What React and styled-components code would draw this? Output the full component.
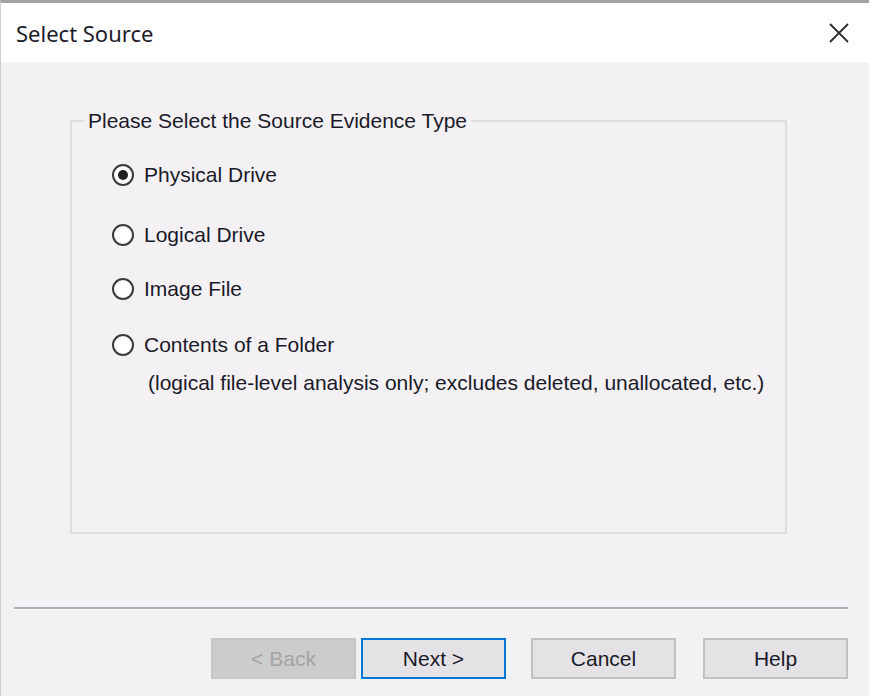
import React, { useState } from 'react';
import styled, { createGlobalStyle } from 'styled-components';

const GlobalStyle = createGlobalStyle`
  html, body {
    margin: 0;
    padding: 0;
    background: #f4f1f5;
  }
  body {
    font-family: "Liberation Sans", Arial, sans-serif;
    color: #1a1a28;
  }
`;

const StyledWindow = styled.div`
  width: 869px;
  height: 696px;
  box-sizing: border-box;
  border-top: 3px solid #a3a3a3;
  border-left: 1px solid #cfcfcf;
  background: #f4f1f5;
  display: flex;
  flex-direction: column;
  overflow: hidden;
`;

const StyledTitleBar = styled.div`
  height: 59px;
  flex-shrink: 0;
  background: #fff;
  display: flex;
  align-items: center;
  justify-content: space-between;
  padding: 0 17px 0 15px;
`;

const StyledTitle = styled.span`
  font-family: "Noto Sans", "Open Sans", sans-serif;
  font-size: 22px;
  color: #1c1c2a;
`;

const StyledClose = styled.button`
  width: 26px;
  height: 26px;
  padding: 0;
  border: none;
  background: transparent;
  display: flex;
  align-items: center;
  justify-content: center;
`;

const StyledBody = styled.div`
  flex: 1;
  display: flex;
  flex-direction: column;
  padding: 0 21px 0 13px;
`;

const StyledGroup = styled.fieldset`
  margin: 47px 61px 0 56px;
  height: 425px;
  box-sizing: border-box;
  border: 2px solid #e0dde1;
  padding: 0;
`;

const StyledLegend = styled.legend`
  font-size: 21px;
  line-height: 24px;
  color: #1a1a28;
  padding: 0 4px;
  margin-left: 12px;
`;

const StyledOptionList = styled.div`
  display: flex;
  flex-direction: column;
  padding-left: 40px;
`;

const StyledOption = styled.label`
  display: flex;
  flex-direction: column;
  margin-top: ${({ $top }) => $top}px;
  cursor: default;
`;

const StyledOptionRow = styled.span`
  display: flex;
  align-items: center;
  height: 24px;
`;

const StyledRadio = styled.span`
  width: 22px;
  height: 22px;
  box-sizing: border-box;
  border-radius: 50%;
  border: 2px solid #3a3a3a;
  background: #fff;
  display: flex;
  align-items: center;
  justify-content: center;
  margin-right: 10px;
  flex-shrink: 0;

  &::after {
    content: '';
    width: 10px;
    height: 10px;
    border-radius: 50%;
    background: #1f1f1f;
    display: ${({ $checked }) => ($checked ? 'block' : 'none')};
  }
`;

const StyledOptionText = styled.span`
  font-size: 21px;
  line-height: 24px;
  color: #1a1a28;
`;

const StyledNote = styled.span`
  font-size: 21px;
  line-height: 24px;
  color: #1a1a28;
  margin: 14px 0 0 36px;
`;

const StyledSeparator = styled.div`
  margin-top: 73px;
  height: 2px;
  background: #b0aeb2;
  border-bottom: 1px solid #ffffff;
`;

const StyledButtonRow = styled.div`
  display: flex;
  justify-content: flex-end;
  margin-top: 28px;
`;

const StyledButton = styled.button`
  width: 145px;
  height: 41px;
  box-sizing: border-box;
  font-family: inherit;
  font-size: 21px;
  margin-left: ${({ $gap }) => $gap}px;
  color: ${({ disabled }) => (disabled ? '#a3a3a3' : '#1a1a28')};
  background: ${({ disabled }) => (disabled ? '#cccccc' : '#e5e2e6')};
  border: ${({ $default }) => ($default ? '2px solid #0078d7' : '2px solid #c2c0c3')};
  border-radius: 0;
  padding: 0;
  ${({ disabled }) => disabled && 'border-color: #c6c6c6;'}
`;

const options = [
  { id: 'physical', label: 'Physical Drive', top: 30 },
  { id: 'logical', label: 'Logical Drive', top: 36 },
  { id: 'image', label: 'Image File', top: 30 },
  {
    id: 'folder',
    label: 'Contents of a Folder',
    top: 32,
    note: '(logical file-level analysis only; excludes deleted, unallocated, etc.)',
  },
];

const CloseIcon = () => (
  <svg width="22" height="22" viewBox="0 0 22 22">
    <path d="M2 2 L20 20 M20 2 L2 20" stroke="#2b2b2b" strokeWidth="1.8" fill="none" />
  </svg>
);

const App = () => {
  const [selected, setSelected] = useState('physical');

  return (
    <>
      <GlobalStyle />
      <StyledWindow>
        <StyledTitleBar>
          <StyledTitle>Select Source</StyledTitle>
          <StyledClose type="button" aria-label="Close">
            <CloseIcon />
          </StyledClose>
        </StyledTitleBar>
        <StyledBody>
          <StyledGroup>
            <StyledLegend>Please Select the Source Evidence Type</StyledLegend>
            <StyledOptionList>
              {options.map((opt) => (
                <StyledOption key={opt.id} $top={opt.top} onClick={() => setSelected(opt.id)}>
                  <StyledOptionRow>
                    <StyledRadio $checked={selected === opt.id} />
                    <StyledOptionText>{opt.label}</StyledOptionText>
                  </StyledOptionRow>
                  {opt.note && <StyledNote>{opt.note}</StyledNote>}
                </StyledOption>
              ))}
            </StyledOptionList>
          </StyledGroup>
          <StyledSeparator />
          <StyledButtonRow>
            <StyledButton type="button" disabled $gap={0}>
              &lt; Back
            </StyledButton>
            <StyledButton type="button" $default $gap={5}>
              Next &gt;
            </StyledButton>
            <StyledButton type="button" $gap={25}>
              Cancel
            </StyledButton>
            <StyledButton type="button" $gap={27}>
              Help
            </StyledButton>
          </StyledButtonRow>
        </StyledBody>
      </StyledWindow>
    </>
  );
};

export default App;
